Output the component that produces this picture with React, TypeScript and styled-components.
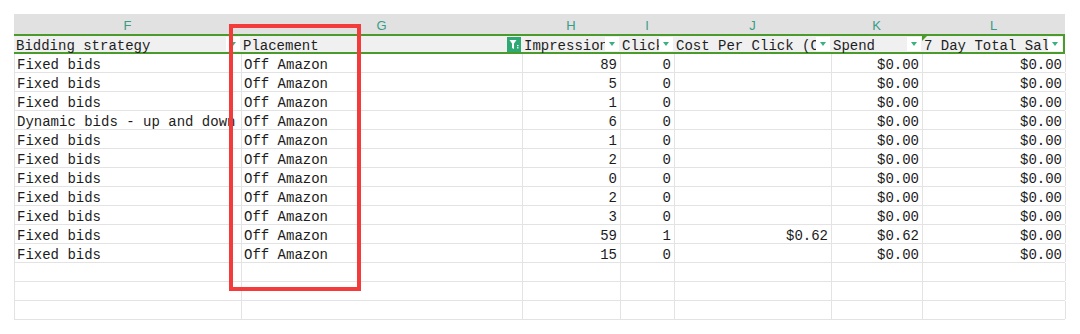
import React from "react";
import styled, { createGlobalStyle } from "styled-components";

const Global = createGlobalStyle`
  html, body { margin: 0; padding: 0; background: #ffffff; }
  body { width: 1080px; height: 334px; overflow: hidden; }
`;

const COLS = "227px 281px 98px 54px 157px 91px 143px";
const GRID_LINE = "#e3e3e3";
const GREEN = "#4a9b2c";

const Page = styled.div`
  position: relative;
  width: 1080px;
  height: 334px;
  padding: 14px 0 0 14px;
  box-sizing: border-box;
`;

const Sheet = styled.div`
  width: 1051px;
  display: flex;
  flex-direction: column;
`;

const LetterRow = styled.div`
  display: grid;
  grid-template-columns: ${COLS};
  height: 20px;
  background: #e1e1e1;
`;

const Letter = styled.div`
  display: flex;
  align-items: center;
  justify-content: center;
  font-family: "Liberation Sans", Arial, sans-serif;
  font-size: 13px;
  color: #3a9c86;
  padding-top: 3px;
  box-sizing: border-box;
`;

const HeaderRow = styled.div`
  display: grid;
  grid-template-columns: ${COLS};
  height: 20px;
  box-sizing: border-box;
  border-top: 2px solid ${GREEN};
  border-bottom: 2px solid ${GREEN};
  background: #f0f0f0;
`;

const HeaderCell = styled.div<{ $last?: boolean }>`
  position: relative;
  display: flex;
  align-items: center;
  min-width: 0;
  box-sizing: border-box;
  padding-left: 2px;
  border-right: ${(p) => (p.$last ? `2px solid ${GREEN}` : "none")};
`;

const HeaderLabel = styled.span`
  flex: 1;
  min-width: 0;
  overflow-x: clip;
  overflow-y: visible;
  white-space: nowrap;
  font-family: "Liberation Mono", "Courier New", monospace;
  font-size: 14px;
  line-height: 12px;
  color: #1e1e1e;
  padding-top: 4px;
  height: 16px;
  box-sizing: border-box;
  align-self: flex-start;
`;

const DropButton = styled.span`
  flex-shrink: 0;
  width: 14px;
  height: 14px;
  margin-right: 1px;
  background: #ffffff;
  display: flex;
  align-items: center;
  justify-content: center;
  &::after {
    content: "";
    border-left: 3px solid transparent;
    border-right: 3px solid transparent;
    border-top: 4px solid #3bb07f;
  }
`;

const FilterActive = styled.span`
  flex-shrink: 0;
  width: 14px;
  height: 15px;
  margin-right: 1px;
  background: #2fa973;
  display: flex;
  align-items: center;
  justify-content: center;
`;

const CornerMark = styled.span`
  position: absolute;
  left: 0;
  top: 0;
  width: 0;
  height: 0;
  border-top: 5px solid ${GREEN};
  border-right: 5px solid transparent;
`;

const DataRow = styled.div`
  display: grid;
  grid-template-columns: ${COLS};
  height: 19px;
  box-sizing: border-box;
  border-bottom: 1px solid ${GRID_LINE};
  border-left: 1px solid ${GRID_LINE};
`;

const Cell = styled.div<{ $num?: boolean }>`
  box-sizing: border-box;
  border-right: 1px solid ${GRID_LINE};
  padding: 5px ${(p) => (p.$num ? "3px" : "0")} 0 ${(p) => (p.$num ? "0" : "2px")};
  text-align: ${(p) => (p.$num ? "right" : "left")};
  font-family: "Liberation Mono", "Courier New", monospace;
  font-size: 14px;
  line-height: 13px;
  height: 18px;
  color: #1c1c1c;
  white-space: nowrap;
  overflow-x: clip;
  overflow-y: visible;
`;

const Highlight = styled.div`
  position: absolute;
  left: 229px;
  top: 24px;
  width: 132px;
  height: 267px;
  box-sizing: border-box;
  border: 4px solid #f43b3b;
  pointer-events: none;
`;

const FunnelIcon = () => (
  <svg width="10" height="11" viewBox="0 0 10 11">
    <path d="M0.5 1 H7.5 L5 4.5 V10 L3 9 V4.5 Z" fill="#ffffff" />
    <rect x="8" y="6" width="1.5" height="1.2" fill="#ffffff" />
    <rect x="8" y="8.2" width="1.5" height="1.2" fill="#ffffff" />
  </svg>
);

type Row = [string, string, string, string, string, string, string];

const rows: Row[] = [
  ["Fixed bids", "Off Amazon", "89", "0", "", "$0.00", "$0.00"],
  ["Fixed bids", "Off Amazon", "5", "0", "", "$0.00", "$0.00"],
  ["Fixed bids", "Off Amazon", "1", "0", "", "$0.00", "$0.00"],
  ["Dynamic bids - up and down", "Off Amazon", "6", "0", "", "$0.00", "$0.00"],
  ["Fixed bids", "Off Amazon", "1", "0", "", "$0.00", "$0.00"],
  ["Fixed bids", "Off Amazon", "2", "0", "", "$0.00", "$0.00"],
  ["Fixed bids", "Off Amazon", "0", "0", "", "$0.00", "$0.00"],
  ["Fixed bids", "Off Amazon", "2", "0", "", "$0.00", "$0.00"],
  ["Fixed bids", "Off Amazon", "3", "0", "", "$0.00", "$0.00"],
  ["Fixed bids", "Off Amazon", "59", "1", "$0.62", "$0.62", "$0.00"],
  ["Fixed bids", "Off Amazon", "15", "0", "", "$0.00", "$0.00"],
  ["", "", "", "", "", "", ""],
  ["", "", "", "", "", "", ""],
  ["", "", "", "", "", "", ""],
];

const letters = ["F", "G", "H", "I", "J", "K", "L"];

export default function App() {
  return (
    <>
      <Global />
      <Page>
        <Sheet>
          <LetterRow>
            {letters.map((l) => (
              <Letter key={l}>{l}</Letter>
            ))}
          </LetterRow>
          <HeaderRow>
            <HeaderCell>
              <HeaderLabel>Bidding strategy</HeaderLabel>
              <DropButton />
            </HeaderCell>
            <HeaderCell>
              <HeaderLabel>Placement</HeaderLabel>
              <FilterActive>
                <FunnelIcon />
              </FilterActive>
            </HeaderCell>
            <HeaderCell>
              <HeaderLabel>Impressions</HeaderLabel>
              <DropButton />
            </HeaderCell>
            <HeaderCell>
              <HeaderLabel>Clicks</HeaderLabel>
              <DropButton />
            </HeaderCell>
            <HeaderCell>
              <HeaderLabel>Cost Per Click (CPC)</HeaderLabel>
              <DropButton />
            </HeaderCell>
            <HeaderCell>
              <HeaderLabel>Spend</HeaderLabel>
              <DropButton />
            </HeaderCell>
            <HeaderCell $last>
              <CornerMark />
              <HeaderLabel>7 Day Total Sales</HeaderLabel>
              <DropButton />
            </HeaderCell>
          </HeaderRow>
          {rows.map((r, i) => (
            <DataRow key={i}>
              <Cell>{r[0]}</Cell>
              <Cell>{r[1]}</Cell>
              <Cell $num>{r[2]}</Cell>
              <Cell $num>{r[3]}</Cell>
              <Cell $num>{r[4]}</Cell>
              <Cell $num>{r[5]}</Cell>
              <Cell $num>{r[6]}</Cell>
            </DataRow>
          ))}
        </Sheet>
        <Highlight />
      </Page>
    </>
  );
}
